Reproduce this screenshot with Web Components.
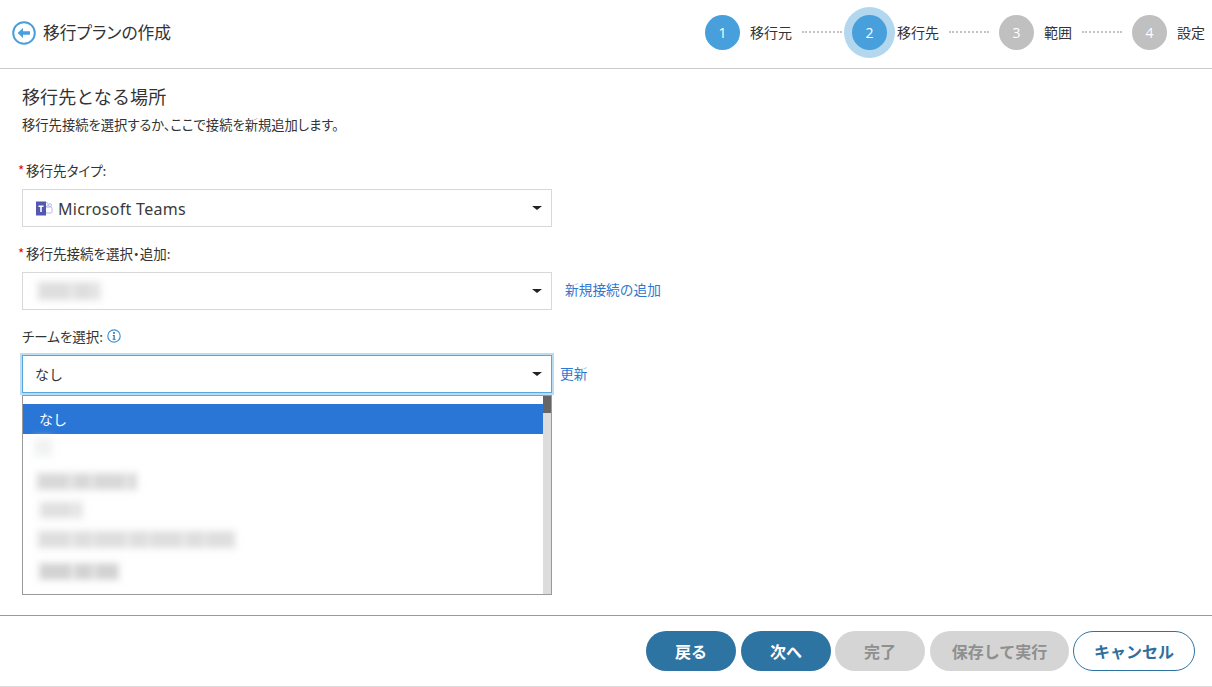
<!DOCTYPE html>
<html lang="ja"><head><meta charset="utf-8"><title>移行プランの作成</title>
<style>
html,body{margin:0;padding:0;background:#fff;width:1212px;height:687px;overflow:hidden}
body{font-family:"Noto Sans CJK JP","Noto Sans",sans-serif;color:#333}
</style></head><body>
<x-app>
  <x-header slot="header" title-text="移行プランの作成">
    <x-step n="1" state="done">移行元</x-step>
    <x-dots></x-dots>
    <x-step n="2" state="current">移行先</x-step>
    <x-dots></x-dots>
    <x-step n="3">範囲</x-step>
    <x-dots></x-dots>
    <x-step n="4">設定</x-step>
  </x-header>
  <x-main slot="main" heading="移行先となる場所" sub="移行先接続を選択するか、ここで接続を新規追加します。">
    <x-field label="移行先タイプ:" required>
      <x-select><svg slot="icon" width="18" height="18" viewBox="0 0 18 18"><circle cx="11.2" cy="5.5" r="2" fill="none" stroke="#b9b6e0" stroke-width="1"/><circle cx="15" cy="6.2" r="1.5" fill="none" stroke="#b9b6e0" stroke-width="1"/><rect x="9" y="8" width="8" height="6" rx="1.5" fill="none" stroke="#b9b6e0" stroke-width="1"/><rect x="1" y="2.5" width="10" height="14" fill="#5558af"/><path d="M3.5 6.5h5v1.4H6.8v5H5.2v-5H3.5z" fill="#fff"/></svg><span>Microsoft Teams</span></x-select>
    </x-field>
    <x-field label="移行先接続を選択・追加:" required>
      <x-select><x-blur style="--w:60px;--h:16px;--c:#dedede;margin-left:4px"></x-blur></x-select>
      <x-link slot="after" style="margin:0 0 4px 13px">新規接続の追加</x-link>
    </x-field>
    <x-field label="チームを選択:" info>
      <x-select focused>なし</x-select>
      <x-link slot="after" style="margin:0 0 2px 8px">更新</x-link>
    </x-field>
    <x-list>
      <x-option selected>なし</x-option>
      <x-option pad="14"><x-blur style="--w:13px;--h:13px;--c:#f1f3f3;--y:-2px"></x-blur></x-option>
      <x-option pad="15"><x-blur style="--w:98px;--h:15px;--c:#d8d8d8;--y:2px"></x-blur></x-option>
      <x-option pad="18"><x-blur style="--w:40px;--h:14px;--c:#e0e0e0;--y:1px"></x-blur></x-option>
      <x-option pad="16"><x-blur style="--w:195px;--h:15px;--c:#dedede"></x-blur></x-option>
      <x-option pad="17"><x-blur style="--w:78px;--h:15px;--c:#d2d2d2;--y:2px"></x-blur></x-option>
    </x-list>
  </x-main>
  <x-footer slot="footer">
    <x-btn kind="primary" w="90">戻る</x-btn>
    <x-btn kind="primary" w="90" style="margin-left:5px">次へ</x-btn>
    <x-btn kind="off" w="90" style="margin-left:4px">完了</x-btn>
    <x-btn kind="off" w="139" style="margin-left:5px">保存して実行</x-btn>
    <x-btn kind="outline" w="122" style="margin-left:4px">キャンセル</x-btn>
  </x-footer>
</x-app>
<script>
const attr=(el,n,d='')=>el.getAttribute(n)??d;
class Base extends HTMLElement{
  connectedCallback(){if(!this.shadowRoot){this.attachShadow({mode:'open'}).innerHTML=this.render();}}
}
const reg=(name,render)=>customElements.define(name,class extends Base{render(){return render(this)}});
const JP='"Noto Sans CJK JP",sans-serif';

reg('x-app',()=>`<style>:host{display:flex;flex-direction:column;width:1212px;height:687px;box-sizing:border-box;overflow:hidden}
::slotted([slot=main]){flex:1}</style><slot name="header"></slot><slot name="main"></slot><slot name="footer"></slot>`);

reg('x-header',el=>`<style>:host{display:flex;align-items:center;height:69px;box-sizing:border-box;border-bottom:1px solid #ccc;padding:0 7px 4px 12px}
.back{display:block;flex:none;margin-top:2px}
h1{flex:1;margin:0 0 0 7px;font:400 16.8px/24px ${JP};font-feature-settings:"palt";color:#333}
.steps{display:flex;align-items:center}</style>
<svg class="back" width="24" height="24" viewBox="0 0 24 24"><circle cx="12" cy="12" r="10.8" fill="#fff" stroke="#4a9fdc" stroke-width="2"/><path d="M5.6 12l5.4-5v3.2h7v3.6h-7V17z" fill="#4a9fdc"/></svg>
<h1>${attr(el,'title-text')}</h1><div class="steps"><slot></slot></div>`);

reg('x-step',el=>{const s=attr(el,'state');const on=s==='done'||s==='current';
return `<style>:host{display:flex;align-items:center;height:35px;position:relative}
.c{width:35px;height:35px;border-radius:50%;background:${on?'#47a0dc':'#c0c0c0'};color:#fff;font:400 14px/35px "Open Sans",sans-serif;text-align:center;flex:none;${s==='current'?'box-shadow:0 0 0 8px #b2d7ef;':''}}
.l{margin-left:10px;font:400 14px/18px ${JP};color:#333;white-space:nowrap}</style>
<div class="c">${attr(el,'n')}</div><div class="l"><slot></slot></div>`});

reg('x-dots',()=>`<style>:host{display:block;width:40px;height:0;border-top:2px dotted #c4c4c4;margin:0 10px}</style>`);

reg('x-main',el=>`<style>:host{display:block;padding:15px 0 0 22px;box-sizing:border-box;min-height:0}
h2{margin:0;font:400 18px/25px ${JP};color:#333;letter-spacing:.1px}
p{margin:7px 0 28px;font:400 13.3px/18px ${JP};font-feature-settings:"palt";color:#333}</style>
<h2>${attr(el,'heading')}</h2><p>${attr(el,'sub')}</p><slot></slot>`);

reg('x-field',el=>{const r=el.hasAttribute('required');return `<style>:host{display:block;margin-bottom:18px;margin-top:-1px}
.lab{display:flex;align-items:center;height:18px;margin-bottom:10px;font:400 13.5px/18px ${JP};font-feature-settings:"palt";color:#333;white-space:nowrap}
.req{color:#e00;margin-left:-4px;width:8px;flex:none}
.row{display:flex;align-items:center}
svg{margin-left:3px;display:block}</style>
<div class="lab">${r?'<span class="req">*</span>':''}<span>${attr(el,'label')}</span>${el.hasAttribute('info')?'<svg width="16" height="16" viewBox="0 0 16 16"><circle cx="8" cy="8" r="6.2" fill="none" stroke="#3f93d6" stroke-width="1.2"/><circle cx="8" cy="5" r="1" fill="#2f6f9f"/><path d="M6.8 7h1.9v3.8h.9v.9H6.6v-.9h.9V7.9h-.7z" fill="#2f6f9f"/></svg>':''}</div>
<div class="row"><slot></slot><slot name="after"></slot></div>`});

reg('x-select',el=>{const f=el.hasAttribute('focused');
return `<style>:host{display:flex;align-items:center;width:530px;height:38px;box-sizing:border-box;flex:none;background:#fff;border:1px solid ${f?'#5aa7dc':'#d8d8d8'};${f?'box-shadow:0 0 0 2px #bcdcf2;':''}padding:0 9px 0 12px;font:400 14px/20px ${JP};color:#333}
.v{flex:1;display:flex;align-items:center;min-width:0}
::slotted(svg){margin-right:5px;flex:none}
::slotted(span){font:400 16px/22px "Noto Sans","Open Sans",sans-serif;color:#3a3a3a;letter-spacing:.3px;padding-top:2px}
.a{width:0;height:0;border-left:5px solid transparent;border-right:5px solid transparent;border-top:4.5px solid #222;flex:none}</style>
<div class="v"><slot name="icon"></slot><slot></slot></div><div class="a"></div>`});

reg('x-blur',()=>`<style>:host{display:block;width:var(--w);height:var(--h);background:repeating-linear-gradient(90deg,var(--c) 0 31px,#ececec 31px 35px,var(--c) 35px 52px,#e8e8e8 52px 56px);box-shadow:0 0 4px 3px #f3f3f3;filter:blur(3px);transform:translateY(var(--y,0))}</style>`);

reg('x-link',()=>`<style>:host{display:inline-block;font:400 13.7px/18px ${JP};color:#2f78d0;white-space:nowrap}</style><slot></slot>`);

reg('x-list',()=>`<style>:host{display:flex;width:530px;height:200px;box-sizing:border-box;border:1px solid #9a9a9a;margin-top:-16px;background:#fff;overflow:hidden}
.o{flex:1;padding-top:8px;min-width:0}
.s{width:8px;flex:none;background:#dcdcdc}.t{height:17px;background:#666}</style>
<div class="o"><slot></slot></div><div class="s"><div class="t"></div></div>`);

reg('x-option',el=>{const sel=el.hasAttribute('selected');
return `<style>:host{display:flex;align-items:center;height:30px;padding-left:${attr(el,'pad','16')}px;background:${sel?'#2976d6':'transparent'};color:${sel?'#fff':'#333'};font:400 14px/20px ${JP}}</style><slot></slot>`});

reg('x-footer',()=>`<style>:host{display:flex;align-items:flex-start;justify-content:flex-end;height:72px;box-sizing:border-box;border-top:1px solid #999;border-bottom:1px solid #ddd;padding:15px 17px 0 0;flex:none}</style><slot></slot>`);

reg('x-btn',el=>{const k=attr(el,'kind');
const st=k==='primary'?'background:#2e74a3;color:#fff;':k==='off'?'background:#d5d5d5;color:#8f8f8f;':'background:#fff;color:#2e6f9e;border:1px solid #2e74a3;';
return `<style>:host{display:flex;align-items:center;justify-content:center;box-sizing:border-box;width:${attr(el,'w')}px;height:40px;border-radius:20px;flex:none;${st}font:700 16px/20px ${JP};white-space:nowrap}</style><slot></slot>`});
</script>
</body></html>
